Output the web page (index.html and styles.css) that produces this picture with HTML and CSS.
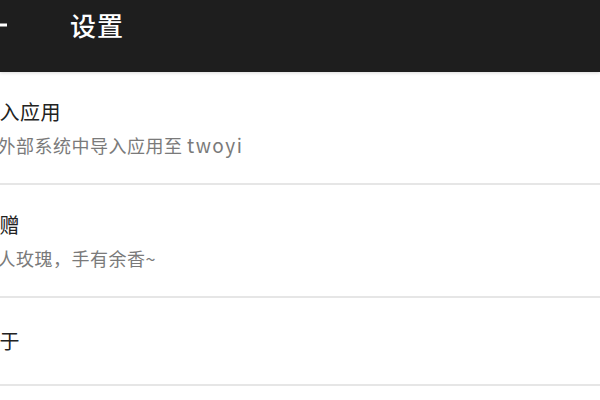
FILE: index.html
```html
<!DOCTYPE html>
<html lang="zh-CN">
<head>
<meta charset="utf-8">
<link rel="stylesheet" href="styles.css">
</head>
<body>
<header class="toolbar">
  <svg class="back" width="30" height="30" viewBox="0 0 30 30" aria-hidden="true">
    <path d="M2 15 H30 M2 15 L12 5 M2 15 L12 25" stroke="#ffffff" stroke-width="3" fill="none"/>
  </svg>
  <h1 class="title">设置</h1>
</header>
<ul class="list">
  <li class="item item-tall">
    <div class="texts">
      <div class="item-title">导入应用</div>
      <div class="item-sub">从外部系统中导入应用至 <span class="latin">twoyi</span></div>
    </div>
  </li>
  <li class="item item-tall">
    <div class="texts">
      <div class="item-title">捐赠</div>
      <div class="item-sub">赠人玫瑰，手有余香~</div>
    </div>
  </li>
  <li class="item item-short">
    <div class="texts">
      <div class="item-title">关于</div>
    </div>
  </li>
</ul>
</body>
</html>
```
FILE: styles.css
```css
* { box-sizing: border-box; }
html, body {
  margin: 0;
  padding: 0;
  background: #ffffff;
  width: 600px;
  height: 400px;
  overflow: hidden;
  font-family: "Noto Sans CJK SC", "Noto Sans", sans-serif;
}
.toolbar {
  height: 72px;
  background: #1e1e1e;
  display: flex;
  align-items: flex-start;
  padding-top: 8px;
  box-shadow: 0 1px 3px rgba(0,0,0,0.15);
  position: relative;
  z-index: 1;
}
.back {
  margin-left: -23px;
  margin-top: 2px;
  flex: none;
}
.title {
  margin: 0 0 0 63px;
  color: #ffffff;
  font-size: 26px;
  font-weight: 500;
  line-height: 34px;
  letter-spacing: 1px;
}
.list {
  list-style: none;
  margin: 0;
  padding: 0;
}
.item {
  display: flex;
  align-items: center;
  border-bottom: 2px solid #e6e6e6;
}
.item-tall { height: 113px; }
.item-short { height: 88px; }
.texts {
  margin-left: -21px;
  display: flex;
  flex-direction: column;
  gap: 8px;
}
.item-title {
  font-size: 20px;
  line-height: 26px;
  letter-spacing: 0.5px;
  color: #222222;
}
.item-sub {
  font-size: 18px;
  line-height: 24px;
  letter-spacing: 0.5px;
  color: #7a7a7a;
}
.latin {
  font-size: 19px;
  letter-spacing: 1.5px;
}
```
